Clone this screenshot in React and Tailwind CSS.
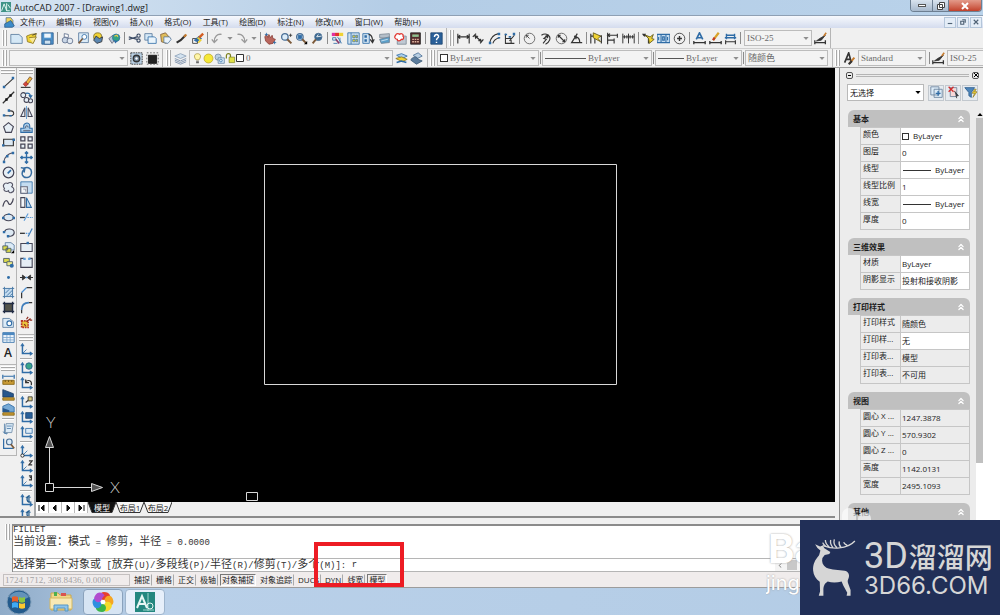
import { useState } from 'react';
import { ChevronsUp } from 'lucide-react';

const B = '#2f6ca6';
const L = '#a9cdea';
const Y = '#f0d234';
const K = '#333333';

const ucs = (
  <>
    <path d="M3 2v11h11" stroke={B} strokeWidth="1.8" />
    <path d="M1 4l2-3 2 3M12 11l3 2-3 2" stroke={B} strokeWidth="1.3" />
  </>
);

const magnifier = (
  <>
    <circle cx="6" cy="6" r="4" fill="#dcecf8" stroke="#4a6f96" strokeWidth="1.6" />
    <path d="M9 9l5 5" stroke="#7c5a3a" strokeWidth="2.4" />
  </>
);

// every icon is drawn on a 16 x 16 grid
const ICONS = {
  new: <path d="M1 3h10l4 3.500V14H1z" fill="#d5e8f6" stroke="#58799c" />,
  open: <><path d="M2 5l5-2 7-1-4 12-7-2z" fill={Y} stroke="#8a7420" /><path d="M5 7l9-1-4 8" fill="#f7e89a" stroke="#8a7420" /><path d="M9 4l5-2" stroke={K} /></>,
  save: <><path d="M1 1h14v14H1z" fill="#4f93cc" stroke="#2b5d8e" /><path d="M4 2h8v5H4z" fill="#eef6fc" stroke="none" /><path d="M4 10h8v5H4z" fill="#cfe2f1" stroke="#2b5d8e" /></>,
  print: <><path d="M4 2l5 1v4l-5-1z" fill="#fff" stroke="#5d6d8a" /><circle cx="5" cy="10" r="3.500" fill="#c9d6e6" stroke="#5d6d8a" /><circle cx="11" cy="11" r="3.500" fill="#e3eaf2" stroke="#5d6d8a" /></>,
  preview: <><path d="M2 1h12v12H2z" fill="#dcebf7" stroke="#58799c" /><circle cx="9" cy="6" r="3" fill="#fff" stroke={B} /><path d="M7 8l-5 6" stroke="#7c5a3a" strokeWidth="2" /></>,
  publish: <><circle cx="7" cy="6" r="5" fill={Y} stroke="#7a6b2c" /><path d="M5 5l4 3 4-2-1 6-6 2-4-4z" fill="#5b86b0" stroke={K} /></>,
  globe: <><path d="M1 8l5-4 3 5-4 5z" fill="#b7c6d6" stroke="#667" /><circle cx="10" cy="7" r="4.500" fill="#33a383" stroke={B} /><path d="M7 10l5 1-3 3z" fill="#2f6ca6" /><path d="M8 5l3-1 1 2" stroke="#e8c84a" strokeWidth="1.500" /></>,
  cut: <><path d="M1 6l10 3M1 9l10-3" stroke="#3c4c66" strokeWidth="1.500" /><circle cx="13" cy="10.500" r="2" stroke="#3c4c66" strokeWidth="1.400" /><circle cx="13" cy="4.500" r="2" stroke="#3c4c66" strokeWidth="1.400" /></>,
  copy: <><path d="M1 2h9v8H1z" fill="#d5e8f6" stroke="#58799c" /><path d="M5 6h8l2 2v6H5z" fill="#eaf4fb" stroke="#2f6ca6" /></>,
  paste: <><path d="M2 3l6-2 6 7-5 6-6-2z" fill="#e0bd5a" stroke="#7c5a3a" /><path d="M6 6h7l2 3-4 5-5-1z" fill="#e9f3fb" stroke="#58799c" /></>,
  pencil: <><path d="M2 13l5-3 6-6" stroke={K} strokeWidth="2.600" /><path d="M11 6l3-3" stroke="#c77b2d" strokeWidth="2.600" /></>,
  brush: <><path d="M2 8h6v6H2z" fill="#f4f4f4" stroke={K} /><path d="M4 10l6-5 3 3-6 4z" fill={B} stroke={B} /><path d="M8 7l4 3-3 3" stroke={Y} strokeWidth="2" /><path d="M10 7l5-5" stroke="#d35f23" strokeWidth="3" /></>,
  undo: <path d="M13 3C8 2 4 5 4 12M1 9l3 4 4-4" stroke="#9a9a9a" strokeWidth="1.600" />,
  redo: <path d="M3 3c5-1 9 2 9 9M15 9l-3 4-4-4" stroke="#9a9a9a" strokeWidth="1.600" />,
  pan: <><path d="M3 3l2 4 1-4 2 4 2-3 1 4 3 1-3 5-5 1-4-4-1-5z" fill="#b8655c" stroke="#8a4038" /><path d="M1 3h4M3 1v4M11 13h4M13 11v4" stroke={B} /></>,
  zoom: <>{magnifier}<path d="M11 4h4M13 2v4" stroke={K} /></>,
  zoomwin: <>{magnifier}<path d="M4 4h4v4H4z" fill={B} stroke={B} /><path d="M15 11v4h-4z" fill="#000" stroke="none" /></>,
  zoomprev: <><circle cx="9" cy="6" r="4.500" fill="#3b688f" stroke="#4a6f96" /><path d="M6 9l-4 5" stroke="#7c5a3a" strokeWidth="2.400" /><path d="M13 5l-6 1 2-3" stroke="#fff" /></>,
  props: <><path d="M1 1h4v4H1z" fill="#e02fa0" stroke="none" /><path d="M5 1h5v4H5z" fill="#e02f2f" stroke="none" /><path d="M10 1h5v4h-5z" fill={Y} stroke="none" /><path d="M2 7h4v3H2zM8 6l5 8M3 14h5M11 7v7" stroke={B} /><path d="M6 9l4 5" stroke="#8a3a6a" strokeWidth="2" /></>,
  center: <><path d="M1 1h14v14H1z" fill="#cfe2f1" stroke={B} /><path d="M5 1v14" stroke={B} /><path d="M7 4h3v3H7zM11 4h2v3h-2zM7 9h3v3H7zM11 9h2v3h-2z" fill={Y} stroke={B} strokeWidth=".8" /></>,
  palette: <><path d="M1 2h8v12H1z" fill="#cfe2f1" stroke={B} /><path d="M3 4h3v3H3zM3 9h3v3H3z" fill={B} stroke="none" /><path d="M8 3c4 0 5 3 5 9M10 9l3 4 2-4" stroke={K} strokeWidth="1.500" /></>,
  sheet: <><path d="M2 3l12-1v6L2 7z" fill="#b4bfc9" stroke="#7b8794" /><path d="M2 9l12-3v7L4 14z" fill="#5ca0c9" stroke="#6b7f93" /><path d="M4 11l8-2" stroke="#dcebf7" /></>,
  markup: <><path d="M4 5h11v10H4z" fill="#bfc9d3" stroke="#7b8794" /><path d="M2 4c1-3 4-2 5-1 2-2 5 0 4 2 2 2 0 5-2 4-2 3-5 2-5 0-3 0-4-3-2-5z" fill="#fff" stroke="#e0332d" strokeWidth="1.500" /></>,
  calc: <><path d="M2 1h12v14H2z" fill="#542c2c" stroke="#222" /><path d="M4 3h8v3H4z" fill="#8fc08f" stroke="none" /><path d="M4 9h8M4 12h8" stroke="#e2b7a2" strokeDasharray="2 1" strokeWidth="1.600" /></>,
  help: <><path d="M1 1h14v14H1z" fill="#2a6099" stroke="#1d4570" /><path d="M5.500 6c0-4 5.500-3.500 5 0-.3 1.500-2.500 1.500-2.500 4M8 12v1.500" stroke="#fff" strokeWidth="1.800" /></>,
  linear: <path d="M1 2v12M15 2v12M1 6h14M4 4L1 6l3 2M12 4l3 2-3 2" stroke={K} strokeWidth="1.400" />,
  aligned: <><path d="M1 6l4-4M10 14l4-5M3 4l9 8" stroke={K} strokeWidth="1.500" /><path d="M3 4l5 1-4 4zM12 12l-5-1 4-3z" fill={K} stroke="none" /></>,
  arclen: <><path d="M2 14C3 8 7 3 13 2M6 14c1-4 4-6 8-7" stroke={K} strokeWidth="1.300" /><path d="M1 12h3v3H1zM12 1h3v3h-3zM12 6h3v2h-3z" fill={B} stroke="none" /></>,
  ordinate: <><path d="M3 2v12h11M3 8h7v6M8 11l6-7" stroke={K} strokeWidth="1.300" /><path d="M2 2h3v2H2zM7 5h3v2H7zM12 1h3v3h-3z" fill={B} stroke="none" /></>,
  radius: <><circle cx="8" cy="8" r="6.500" stroke="#555" /><path d="M8 8L4 4M4 7V4h3" stroke={K} /></>,
  jogged: <><path d="M3 4c6-4 12 1 10 6-1 3-3 4-5 5" stroke={K} strokeWidth="1.400" /><path d="M5 14l4-5-3-1 5-4" stroke={K} strokeWidth="1.400" /><path d="M12 3l-1 5-4-3z" fill={K} stroke="none" /></>,
  diameter: <><circle cx="8" cy="8" r="6.500" stroke="#555" /><path d="M4 4l8 8M4 7V4h3M12 9v3H9" stroke={K} strokeWidth="1.400" /></>,
  angular: <path d="M9 2L2 13h13M6 6c4 0 6 3 6 7M5 5l3 1-1 3" stroke={K} strokeWidth="1.500" />,
  quick: <><path d="M1 2v12M6 2v12M14 4v10M1 5h13" stroke={K} strokeWidth="1.400" /><path d="M4 1l9 4-3 3 3 4-9-5z" fill={Y} stroke="#5c5414" /></>,
  baseline: <path d="M2 1v14M2 4h12M14 2v5M2 10h8M10 8v6M5 2L2 4l3 2" stroke={K} strokeWidth="1.400" />,
  contin: <path d="M1 2v12M8 2v12M15 2v12M1 6h14M3 4v4M6 4v4M10 4v4M13 4v4" stroke={K} strokeWidth="1.200" />,
  leader: <><path d="M1 3l7 3v8" stroke={K} strokeWidth="1.500" /><path d="M0 2l5 0-2 4z" fill={K} stroke="none" /><path d="M4 4l6 2 4-3-2 5 3 1-6 5-1-6z" fill={Y} stroke="#5c5414" /></>,
  tolerance: <><path d="M0 3h16v10H0z" fill="#c4dcf0" stroke={B} strokeWidth="1.600" /><path d="M5 3v10M11 3v10M2 6v4M7 6h2v4H7zM13 6v4" stroke={B} strokeWidth="1.300" /></>,
  mark: <><circle cx="8" cy="8" r="6.500" stroke={K} /><path d="M5 8h6M8 5v6" stroke={K} strokeWidth="1.700" /></>,
  dimedit: <><path d="M4 9l4-8 4 8M5 7h6" stroke={B} strokeWidth="2" /><path d="M1 11v4M15 11v4M1 13h14" stroke={K} strokeWidth="1.600" /></>,
  textedit: <><path d="M5 10l7-9" stroke="#d9a32a" strokeWidth="2.800" /><path d="M5 10l2-3" stroke="#c03a2a" strokeWidth="2.800" /><path d="M1 11v4M15 11v4M1 13h14" stroke={K} strokeWidth="1.600" /></>,
  update: <><path d="M3 2v7M13 2v7M3 4h10M1 7h14" stroke={B} strokeWidth="1.700" /><path d="M2 10v5M14 10v5M2 12h12" stroke={K} strokeWidth="1.400" /></>,
  dimstyle: <><path d="M1 10v5M14 10v5M1 13h13" stroke={K} strokeWidth="1.600" /><path d="M3 11l6-1 5-6-7 4z" fill={K} stroke={K} /><path d="M12 5l3-4" stroke="#c77b2d" strokeWidth="2" /></>,
  textstyle: <><path d="M2 13L7 1l3 11M4 9h5" stroke={K} strokeWidth="2" /><path d="M8 14l6-7" stroke="#c77b2d" strokeWidth="2.400" /><path d="M7 15l4-4" stroke={K} strokeWidth="2.600" /></>,
  gear: <><path d="M1 1h14v14H1z" fill="#b9cfe2" stroke="#222" strokeDasharray="2 1" /><circle cx="8" cy="8" r="4" fill="#6b7f93" stroke={K} strokeWidth="1.600" /><circle cx="8" cy="8" r="1.500" fill="#fff" stroke="none" /></>,
  workspace: <><path d="M3 4h10v10H3z" fill="#222" stroke="#111" /><path d="M1 1h14v14H1z" stroke="#555" strokeDasharray="2 2" /></>,
  layers: <><path d="M1 5l7-3 7 3-7 3z" fill="#d3e2ef" stroke="#8aa0b8" /><path d="M1 8l7 3 7-3M1 10l7 3 7-3M1 12l7 3 7-3" stroke="#7188a5" /></>,
  layercur: <><path d="M2 4l6-2 7 3-6 3z" fill={L} stroke={B} /><path d="M1 8l7-2 7 3-6 3z" fill={Y} stroke="#8a7420" /><path d="M2 13l6-2 6 2" stroke={B} strokeWidth="1.800" /></>,
  layerprev: <><path d="M4 4l6-3 5 4-6 3z" fill="#b9cfe2" stroke="#4a6f96" /><path d="M1 10c2-5 8-5 9-1l5 2-7 4z" fill="#5c7c9c" stroke="#3f5c78" /></>,
  bulb: <><path d="M8 1c6 0 5 6 2 9H6C3 7 2 1 8 1z" fill="#fff6a8" stroke="#a49032" /><path d="M6 12h4M6 14h4" stroke="#666" strokeWidth="1.500" /></>,
  sun: <circle cx="8" cy="8" r="6.500" fill="#f5e837" stroke="#b59e20" />,
  vpsun: <><circle cx="6" cy="6" r="4.500" fill="#b9cfe2" stroke="#6b7f93" /><path d="M6 7h9v8H6z" fill="#d5e8f6" stroke="#58799c" /><circle cx="10" cy="11" r="2" stroke={B} /></>,
  lock: <><path d="M2 8V4c0-4 6-4 6 0v2" stroke="#7d8220" strokeWidth="1.800" /><path d="M6 6h8v8H6z" fill="#dfe046" stroke="#7d8220" /></>,
  line: <><path d="M3 13L14 3" stroke={K} strokeWidth="1.300" /><path d="M1 12h3v3H1zM12 1h3v3h-3z" fill={B} stroke="none" /></>,
  xline: <><path d="M1 15L15 1" stroke={K} strokeWidth="1.600" /><path d="M4 9h3v3H4zM9 4h3v3H9z" fill="#111" stroke="none" /></>,
  pline: <><path d="M3 12h8c5 0 4-6 0-6H8" stroke={K} strokeWidth="1.300" /><path d="M1 10h3v3H1zM9 11h3v2H9zM7 4h3v3H7z" fill={B} stroke="none" /></>,
  polygon: <path d="M8 2l6 5-2.500 7h-7L2 7z" fill="#e6eef5" stroke="#445" strokeWidth="1.400" />,
  rect: <><path d="M2 4h12v8H2z" fill="#dde9f3" stroke={K} strokeWidth="1.400" /><path d="M0 10h3v3H0zM13 3h3v3h-3z" fill={B} stroke="none" /></>,
  arc: <><path d="M2 14C3 7 8 3 14 2" stroke="#556" strokeWidth="1.300" /><path d="M1 12h3v3H1zM5 5h3v3H5zM12 1h3v3h-3z" fill={B} stroke="none" /></>,
  circle: <><circle cx="8" cy="8" r="6.500" fill="#e6eef5" stroke="#445" strokeWidth="1.500" /><path d="M7 9l4-4" stroke={B} strokeWidth="2" /></>,
  cloud: <path d="M3 9C0 6 3 1 7 3c4-3 8 1 5 4 4 2 3 6 0 7-2 1-4 0-4-2-3 2-7 0-5-3z" fill="#e6eef5" stroke="#556" strokeWidth="1.400" />,
  spline: <path d="M1 13C4 2 7 6 8 9s5 1 6-6" stroke="#445" strokeWidth="1.500" />,
  ellipse: <><ellipse cx="8" cy="8" rx="6" ry="4" fill="#dde9f3" stroke="#445" strokeWidth="1.400" /><path d="M0 7h3v3H0zM13 7h3v3h-3zM7 3h3v2H7z" fill={B} stroke="none" /></>,
  ellarc: <><path d="M3 7c2-5 12-4 12 1s-6 5-9 4" stroke="#445" strokeWidth="1.400" fill="#dde9f3" /><path d="M1 6h3v3H1zM6 11h3v3H6z" fill={B} stroke="none" /></>,
  insert: <><path d="M4 2h7l4 3v6H4z" fill="#dcebf7" stroke="#58799c" /><path d="M1 6h6v5H1zM5 9h6v5H5z" fill="#d9d84a" stroke="#456" /><path d="M15 11v4h-4z" fill="#000" stroke="none" /></>,
  block: <><path d="M2 3h7v5H2z" fill="#d9d84a" stroke="#456" /><path d="M6 7h7v5H6z" fill="#efec88" stroke="#456" /><circle cx="12" cy="12" r="2.500" fill={B} stroke="none" /></>,
  point: <circle cx="8" cy="8" r="1.800" fill={B} stroke="none" />,
  hatch: <><path d="M3 3h10v10H3z" fill="#c4dcf0" stroke="none" /><path d="M3 1v14M13 1v14M1 3h14M1 13h14M4 9l5-5M6 12l7-7M10 12l3-3" stroke="#4b7ba8" strokeWidth="1.200" /></>,
  gradient: <><path d="M3 3h10v10H3z" fill="#54544a" stroke="none" /><path d="M3 1v14M13 1v14M1 3h14M1 13h14" stroke="#222c44" strokeWidth="1.700" /></>,
  region: <><path d="M1 3h8l5 4v7H1z" fill="#dcebf7" stroke="#58799c" /><circle cx="9" cy="9" r="3" fill="#fff" stroke={B} strokeWidth="1.400" /></>,
  table: <><path d="M1 2h14v12H1z" fill="#eef5fb" stroke={B} /><path d="M1 2h14v3H1z" fill="#4c88c0" stroke="none" /><path d="M1 8h14M1 11h14M6 5v9M10 5v9" stroke="#7ba5cc" /></>,
  dist: <><path d="M1 2v5M15 2v5M2 4h12" stroke={B} strokeWidth="1.500" /><path d="M1 9h14v5H1z" fill="#c89a35" stroke="#836313" /><path d="M4 9v2M8 9v2M12 9v2" stroke="#5b430b" /></>,
  area: <><path d="M1 2l13 5v4H1z" fill="#27578c" stroke="#1b3e66" /><path d="M1 12h14v3H1z" fill="#c89a35" stroke="#836313" /></>,
  massprop: <><path d="M1 4l7-3 7 4v6H1z" fill="#77aad6" stroke={B} /><path d="M1 6l8 3v2H1z" fill="#27578c" stroke="none" /><path d="M1 12h14v3H1z" fill="#c89a35" stroke="#836313" /></>,
  list: <><path d="M5 2h9l-2 11H4z" fill="#dcebf7" stroke="#6f8aa6" /><path d="M6 5h6M6 8h5M3 2v12h4M1 12l5 3" stroke="#4b7ba8" /></>,
  locate: <><path d="M2 2v12h12" stroke={B} strokeWidth="1.500" /><circle cx="9" cy="6" r="3.500" fill="#dcecf8" stroke="#4a6f96" strokeWidth="1.400" /><path d="M11 9l4 5" stroke="#7c5a3a" strokeWidth="2" /></>,
  erase: <><path d="M7 8l5-7 3 2-6 8z" fill="#efb53a" stroke="#7c5a3a" /><path d="M4 10l3-3 3 3-3 3z" fill="#d4483b" stroke="#933" /><path d="M1 14h12" stroke={K} strokeWidth="1.400" /></>,
  copyobj: <><circle cx="4" cy="5" r="3" fill="#e6eef5" stroke="#445" strokeWidth="1.300" /><circle cx="8" cy="11" r="3" fill="#e6eef5" stroke="#445" strokeWidth="1.300" /><circle cx="13" cy="12" r="2.500" fill="#e6eef5" stroke="#445" strokeWidth="1.300" /><path d="M7 3c4-1 6 1 6 4M11 5l2 3 2-3" stroke={B} strokeWidth="1.500" /></>,
  mirror: <><path d="M6 2v11H1zM10 2v11h5z" fill="#e6eef5" stroke="#445" strokeWidth="1.300" /><path d="M8 0v16" stroke="#6aa2d4" strokeWidth="1.300" /></>,
  offset: <><path d="M1 14V9h4C2 2 12 0 12 6v3h3v5z" fill="#a9cdea" stroke={B} strokeWidth="1.300" /><path d="M4 12h9M7 9c-1-4 3-4 3-1" stroke="#445" /></>,
  array: <path d="M1 1h5v5H1zM10 1h5v5h-5zM1 10h5v5H1zM10 10h5v5h-5z" fill="#e6eef5" stroke="#445" strokeWidth="1.500" />,
  move: <path d="M8 1v14M1 8h14M6 3l2-2 2 2M6 13l2 2 2-2M3 6L1 8l2 2M13 6l2 2-2 2" stroke={B} strokeWidth="1.700" />,
  rotate: <path d="M5 3c5-3 10 1 9 6-1 6-9 7-11 2-1-3 0-5 2-7M1 2l5 1-1 5" stroke="#356b9f" strokeWidth="1.800" />,
  scale: <><path d="M1 1h14v14H1z" fill="#c4dcf0" stroke={B} /><path d="M1 7h8v8H1z" fill="#f3f6f9" stroke="#667" strokeWidth="1.300" /><path d="M4 10h3v3" stroke="#889" /></>,
  stretch: <><path d="M1 2h5v12H1z" fill="#f3f6f9" stroke="#445" strokeWidth="1.300" /><path d="M8 2l6 12H8z" fill="#c4dcf0" stroke={B} strokeWidth="1.300" /></>,
  trim: <><path d="M0 8h6" stroke={K} strokeWidth="1.600" /><path d="M9 8h7" stroke="#5d9cd8" strokeDasharray="2 1" strokeWidth="1.500" /><path d="M5 12l5-9" stroke="#5d9cd8" strokeWidth="1.400" /></>,
  extend: <><path d="M0 9h6" stroke={K} strokeWidth="1.600" /><path d="M7 9h4" stroke="#5d9cd8" strokeDasharray="2 1" strokeWidth="1.500" /><path d="M10 13l5-10" stroke="#3f7ebc" strokeWidth="1.500" /></>,
  breakpt: <><path d="M1 3h14v10H1z" fill="#e6eef5" stroke="#445" strokeWidth="1.300" /><path d="M8 1h3v3H8z" fill={B} stroke="none" /></>,
  breaks: <><path d="M5 3H1v11h14V3h-4" fill="#e6eef5" stroke="#445" strokeWidth="1.400" /><path d="M4 2h3v3H4zM10 2h3v3h-3z" fill="#5d9cd8" stroke="none" /></>,
  join: <><path d="M0 8h16" stroke={K} strokeWidth="1.300" /><path d="M3 5l4 3-4 3zM13 5L9 8l4 3z" fill={K} stroke={K} /><path d="M7 7h2v2H7z" fill="#5d9cd8" stroke="none" /></>,
  chamfer: <><path d="M2 15V8M8 2h7" stroke={K} strokeWidth="1.500" /><path d="M2 8l6-6" stroke="#4c8fd0" strokeWidth="1.700" /></>,
  fillet: <><path d="M2 15v-4M11 2h4" stroke={K} strokeWidth="1.500" /><path d="M2 11c0-6 3-9 9-9" stroke="#3f7ebc" strokeWidth="2" /></>,
  explode: <><path d="M2 6h8v8H2z" fill="#e9c53c" stroke="#b83325" strokeDasharray="2 1" strokeWidth="2" /><path d="M8 7l5-4M12 5h3M8 4l2-3M5 10l2 2" stroke="#8f2c20" strokeWidth="1.500" /></>,
  ucs: <>{ucs}<path d="M3 13l5-5" stroke={B} /></>,
  ucsworld: <>{ucs}<circle cx="11" cy="5" r="4" fill="#3aa58a" stroke="#245d8f" /></>,
  ucsprev: <>{ucs}<path d="M14 10c1-6-4-7-7-4M7 3v4h4" stroke={K} strokeWidth="1.500" /></>,
  ucsface: <>{ucs}<path d="M7 8l7-6" stroke={K} strokeWidth="1.300" /><path d="M10 1h5v5h-5z" fill="#d8c878" stroke={K} /></>,
  ucsobj: <>{ucs}<path d="M7 2h8v7H7z" fill="#2a6099" stroke="#1d4570" /></>,
  ucsview: <>{ucs}<path d="M7 3h8v6H7z" fill="#dcebf7" stroke={B} /></>,
  ucsorigin: <>{ucs}<path d="M3 13l6-6" stroke={B} /><circle cx="3" cy="13" r="2" fill="#fff" stroke="#111" /></>,
  ucsz: <>{ucs}<path d="M3 13l5-5" stroke={B} /><path d="M11 1h4l-4 5h4" stroke={K} strokeWidth="1.500" /></>,
  ucs3: <>{ucs}<path d="M3 13l5-5" stroke={B} /><path d="M11 1h3v5h-3M12 3h2" stroke={K} strokeWidth="1.500" /></>,
  ucsx: <>{ucs}<path d="M12 2c-5 1-4 8 0 8M7 4h6M11 5v5h3" stroke="#245d8f" strokeWidth="1.500" /></>,
  pickadd: <><path d="M1 1h10v10H1zM5 4h10v10H5z" fill="#dcebf7" stroke="#667f99" /><path d="M7 9h6M10 6v6" stroke={B} strokeWidth="1.600" /></>,
  pick: <><path d="M4 2h8v11H4z" fill="#f7d9d9" stroke="#667f99" /><path d="M2 1l6 6M8 1L2 7" stroke="#cf2d2d" strokeWidth="1.600" /><path d="M9 6l5 6-3 0 1 3" fill="#345" stroke={K} /></>,
  filter: <><path d="M1 2h12L9 8v6l-3-2V8z" fill="#4e86ba" stroke="#2b5d8e" /><path d="M13 4l-3 5h3l-2 5 5-7h-3l2-3z" fill={Y} stroke="#8a7420" strokeWidth=".8" /></>,
  dwg: <><path d="M3 1h7l3 4v8H3z" fill="#f1d35a" stroke="#3e6286" /><path d="M1 10l9-5 5 8-3 2H1z" fill="#3c8ac9" stroke="#24527c" /></>,
};

function Icon({ name, small }) {
  return (
    <svg viewBox="0 0 16 16" fill="none" className={small ? 'size-[11px] shrink-0' : 'size-[13px] shrink-0'} aria-hidden="true">
      {ICONS[name]}
    </svg>
  );
}

function ToolButton({ name }) {
  return (
    <button type="button" aria-label={name} className="flex h-[15px] w-[14px] shrink-0 items-center justify-center">
      <Icon name={name} />
    </button>
  );
}

const Sep = () => <span className="flex h-3 w-[3px] shrink-0 justify-center"><span className="w-px bg-[#8c8c8c]" /></span>;
const HSep = () => <span className="my-px h-[2px] w-3 shrink-0 border-t border-[#a8a8a8] bg-white" />;

const Grip = () => (
  <span className="mr-[2px] flex h-4 shrink-0 gap-px">
    <span className="w-[2px] border-r border-[#a8a8a8] bg-white" />
    <span className="w-[2px] border-r border-[#a8a8a8] bg-white" />
  </span>
);

const HGrip = () => (
  <span className="my-px flex w-[14px] shrink-0 flex-col gap-px">
    <span className="h-[2px] border-b border-[#a8a8a8] bg-white" />
    <span className="h-[2px] border-b border-[#a8a8a8] bg-white" />
  </span>
);

function Arrow({ dark }) {
  return (
    <svg viewBox="0 0 7 4" className={dark ? 'pointer-events-none h-[3px] w-[6px] shrink-0 text-black' : 'pointer-events-none h-[3px] w-[6px] shrink-0 text-[#8f8f8f]'} fill="currentColor">
      <path d="M0 0h7L3.500 4z" />
    </svg>
  );
}

function Combo({ label, value, width, lead, sans }) {
  return (
    <div className={`flex h-4 shrink-0 items-center gap-[2px] border border-[#bcbcbc] bg-[#f3f3f3] px-[2px] text-[#6a6a6a] ${width}`}>
      {lead}
      <select
        aria-label={label}
        className={`h-full min-w-0 flex-1 appearance-none bg-transparent leading-[14px] outline-none ${sans ? 'text-[9px]' : 'font-["Liberation_Serif"] text-[9px]'}`}
      >
        <option>{value}</option>
      </select>
      <Arrow />
    </div>
  );
}

function renderTool(item, i) {
  if (item === '|') return <Sep key={i} />;
  if (item === 'v') return <span key={i} className="flex w-[7px] justify-center"><Arrow /></span>;
  if (item === 'dimselect') return <Combo key={i} label="标注样式" value="ISO-25" width="w-[68px]" />;
  return <ToolButton key={i} name={item} />;
}

const STANDARD = ['new', 'open', 'save', '|', 'print', 'preview', 'publish', 'globe', '|', 'cut', 'copy', 'paste', 'pencil', 'brush', '|', 'undo', 'v', 'redo', 'v', '|', 'pan', 'zoom', 'zoomwin', 'zoomprev', '|', 'props', 'center', 'palette', 'sheet', 'markup', 'calc', '|', 'help'];
const DIMENSION = ['linear', 'aligned', 'arclen', 'ordinate', '|', 'radius', 'jogged', 'diameter', 'angular', '|', 'quick', 'baseline', 'contin', '|', 'leader', 'tolerance', 'mark', '|', 'dimedit', 'textedit', 'update', '|', 'dimselect', 'dimstyle'];
const DRAW = ['line', 'xline', 'pline', 'polygon', 'rect', 'arc', 'circle', 'cloud', 'spline', 'ellipse', 'ellarc', 'insert', 'block', 'point', 'hatch', 'gradient', 'region', 'table'];
const INQUIRY = ['dist', 'area', 'massprop', '|', 'list', 'locate'];
const MODIFY = ['erase', 'copyobj', 'mirror', 'offset', 'array', 'move', 'rotate', 'scale', 'stretch', 'trim', 'extend', 'breakpt', 'breaks', 'join', 'chamfer', 'fillet', 'explode'];
const UCS = ['ucs', '|', 'ucsworld', 'ucsprev', '|', 'ucsface', 'ucsobj', 'ucsview', '|', 'ucsorigin', 'ucsz', 'ucs3', '|', 'ucsx', 'ucsx'];
const MENUS = ['文件(F)', '编辑(E)', '视图(V)', '插入(I)', '格式(O)', '工具(T)', '绘图(D)', '标注(N)', '修改(M)', '窗口(W)', '帮助(H)'];

const vertical = (item, i) => (item === '|' ? <HSep key={i} /> : <ToolButton key={i} name={item} />);

function TitleBar() {
  return (
    <header className="flex h-[15px] shrink-0 items-start bg-linear-to-r from-[#d6e4f2] via-[#b4cde6] via-40% to-[#b9d2ea]">
      <svg viewBox="0 0 16 16" className="mt-[2px] ml-px size-[10px]">
        <path d="M0 0h16v16H0z" fill="#3f9287" />
        <path d="M1 14L5 3l4 11M9 2v12h5M11 4l4 6" stroke="#e7f7f3" strokeWidth="1.500" fill="none" />
      </svg>
      <h1 className="ml-[3px] font-['Open_Sans'] text-[9px] leading-[15px] text-[#1c1c1c]">AutoCAD 2007 - [Drawing1.dwg]</h1>
      <div className="mr-px ml-auto flex h-3 overflow-hidden rounded-b-sm border border-t-0 border-[#6d7f92]">
        <button type="button" aria-label="最小化" className="flex w-[22px] items-center justify-center border-r border-[#6d7f92] bg-linear-to-b from-[#d9e3ee] to-[#a7b9cd]">
          <span className="h-[3px] w-2 border border-[#555] bg-white" />
        </button>
        <button type="button" aria-label="还原" className="flex w-4 items-center justify-center border-r border-[#6d7f92] bg-linear-to-b from-[#d9e3ee] to-[#a7b9cd]">
          <svg viewBox="0 0 8 8" className="size-2" fill="#fff" stroke="#444"><path d="M2.500.5h5v5h-5zM.5 2.500h5v5h-5z" /></svg>
        </button>
        <button type="button" aria-label="关闭" className="flex w-8 items-center justify-center bg-linear-to-b from-[#e39a8a] to-[#c2402a]">
          <svg viewBox="0 0 8 8" className="size-2" stroke="#fff" strokeWidth="2"><path d="M1 1l6 6M7 1L1 7" /></svg>
        </button>
      </div>
    </header>
  );
}

function MenuBar() {
  return (
    <nav className="flex h-[13px] shrink-0 items-center border-t border-[#8fa0b4] bg-linear-to-b from-[#f7f9fd] to-[#d4dcee] pl-1 text-[8px] leading-3 text-[#222]">
      <Icon name="dwg" small />
      <div className="ml-[5px] flex w-[401px] justify-between">
        {MENUS.map((m) => (
          <button key={m} type="button">{m}</button>
        ))}
      </div>
      <div className="mr-px ml-auto flex gap-px">
        {['M1 6h6', 'M3 1h4v4M1 3h4v4H1z', 'M1 1l6 6M7 1L1 7'].map((d) => (
          <button key={d} type="button" aria-label="文档窗口" className="flex h-[11px] w-3 items-center justify-center border border-[#b4c6da] bg-[#e4edf7]">
            <svg viewBox="0 0 8 8" className="size-[6px]" fill="none" stroke="#4f6275" strokeWidth="1.500"><path d={d} /></svg>
          </button>
        ))}
      </div>
    </nav>
  );
}

const SampleLine = ({ wide }) => <span className={wide ? 'h-px w-[41px] bg-[#555]' : 'h-px w-[26px] bg-[#555]'} />;

function Toolbars() {
  return (
    <div className="shrink-0 bg-[#f0f0f0]">
      <div className="flex h-[21px] items-center border-b border-[#cfcfcf]">
        <div className="flex h-full w-[447px] items-center border-r border-[#b5b5b5] pl-[2px]">
          <Grip />
          <div className="flex w-[434px] items-center justify-between">{STANDARD.map(renderTool)}</div>
        </div>
        <div className="flex h-full w-[384px] items-center border-r border-[#b5b5b5] pl-[2px]">
          <Grip />
          <div className="flex w-[372px] items-center justify-between">{DIMENSION.map(renderTool)}</div>
        </div>
      </div>
      <div className="flex h-[19px] items-center overflow-hidden border-b border-[#9d9d9d]">
        <div className="flex h-full w-[163px] shrink-0 items-center border-r border-[#b5b5b5] pl-[2px]">
          <Grip />
          <Combo label="工作空间" value="" width="w-[119px]" />
          <span className="ml-px flex gap-[2px]">
            <ToolButton name="gear" />
            <ToolButton name="workspace" />
          </span>
        </div>
        <div className="flex h-full w-[265px] shrink-0 items-center border-r border-[#b5b5b5] pl-[3px]">
          <Grip />
          <ToolButton name="layers" />
          <Combo
            label="图层"
            value="0"
            width="w-[204px] ml-[2px]"
            lead={
              <span className="flex items-center">
                <Icon small name="bulb" /><Icon small name="sun" /><Icon small name="vpsun" /><Icon small name="lock" />
                <svg viewBox="0 0 8 8" className="size-2" fill="#fff" stroke="#333"><path d="M.5.5h7v7h-7z" /></svg>
              </span>
            }
          />
          <span className="ml-px flex gap-px">
            <ToolButton name="layercur" />
            <ToolButton name="layerprev" />
          </span>
        </div>
        <div className="flex h-full w-[405px] shrink-0 items-center border-r border-[#b5b5b5] pl-[2px]">
          <Grip />
          <Combo label="颜色" value="ByLayer" width="w-[102px]" lead={<span className="size-2 border border-[#333] bg-white" />} />
          <Sep />
          <Combo label="线型" value="ByLayer" width="w-[110px]" lead={<SampleLine wide />} />
          <Sep />
          <Combo label="线宽" value="ByLayer" width="w-[87px]" lead={<SampleLine />} />
          <Sep />
          <Combo label="打印样式" value="随颜色" width="w-[83px]" sans />
        </div>
        <div className="flex h-full min-w-0 flex-1 items-center overflow-hidden pl-[2px]">
          <Grip />
          <ToolButton name="textstyle" />
          <Combo label="文字样式" value="Standard" width="w-[68px] mx-[2px]" />
          <Sep />
          <ToolButton name="dimstyle" />
          <Combo label="标注样式" value="ISO-25" width="w-[68px] ml-[2px]" />
        </div>
      </div>
    </div>
  );
}

function SideTools() {
  return (
    <div className="flex w-9 shrink-0 items-start justify-between overflow-hidden border-r-2 border-[#a5a8aa] bg-[#f0f0f0]">
      <div className="flex w-[17px] flex-col">
        <div className="flex flex-col items-center border-r border-b border-[#b5b5b5] pb-1">
          <HGrip />
          {DRAW.map(vertical)}
          <button type="button" aria-label="多行文字" className="h-[15px] font-['Open_Sans'] text-[12px] leading-[15px] font-semibold text-[#222]">A</button>
        </div>
        <div className="flex flex-col items-center border-r border-b border-[#b5b5b5] pb-1">
          <HGrip />
          {INQUIRY.map(vertical)}
        </div>
      </div>
      <div className="flex h-full w-4 flex-col overflow-hidden">
        <div className="flex flex-col items-center border-b border-[#b5b5b5] pb-1">
          <HGrip />
          {MODIFY.map(vertical)}
        </div>
        <div className="flex min-h-0 flex-1 flex-col items-center overflow-hidden">
          <HGrip />
          {UCS.map(vertical)}
        </div>
      </div>
    </div>
  );
}

function DrawingArea() {
  return (
    <div className="min-h-0 flex-1 overflow-hidden bg-black">
      <svg className="h-full w-full" viewBox="0 0 798 434" preserveAspectRatio="xMinYMin meet" fill="none" stroke="#d8d8d8" strokeWidth="1">
        <path d="M228.500 96.500h352v220h-352z" />
        <path d="M9.500 415.500h8v8h-8zM13.500 415.500v-36M17.500 419.500h38" />
        <path d="M13.500 368.500l4 11h-8zM66.500 419.500l-11 4v-8z" fill="#555" />
        <path d="M210.500 424.500h11v8h-11z" />
        <g fill="#cfcfcf" stroke="none" fontFamily="Lato" fontWeight="300" fontSize="16">
          <text x="10" y="360">Y</text>
          <text x="74" y="425">X</text>
        </g>
      </svg>
    </div>
  );
}

function LayoutTabs() {
  const [active, setActive] = useState('模型');
  return (
    <div className="flex h-[11px] shrink-0 items-center bg-[#f0f0f0] text-[8px] leading-[10px] text-[#222]">
      <div className="flex bg-white">
        {['M1 1v6M6 1L3 4l3 3z', 'M5 1L2 4l3 3z', 'M3 1l3 3-3 3z', 'M2 1l3 3-3 3zM7 1v6'].map((d) => (
          <button key={d} type="button" aria-label="切换布局" className="flex h-[11px] w-[13px] items-center justify-center border-r border-[#bbb]">
            <svg viewBox="0 0 8 8" className="size-2" fill="#111" stroke="#111"><path d={d} /></svg>
          </button>
        ))}
      </div>
      {['模型', '布局1', '布局2'].map((tab) => (
        <button
          key={tab}
          type="button"
          onClick={() => setActive(tab)}
          className="relative flex h-[11px] w-7 items-center justify-center"
        >
          <svg viewBox="0 0 28 11" className="absolute inset-0 h-full w-full" fill={active === tab ? '#111' : '#f6f6f6'} stroke="#333">
            <path d="M0 0l4 10.500h20L28 0" />
          </svg>
          <span className={active === tab ? 'relative text-white' : 'relative'}>{tab}</span>
        </button>
      ))}
    </div>
  );
}

const GROUPS = [
  { title: '基本', rows: [['颜色', 'ByLayer', 'swatch'], ['图层', '0'], ['线型', 'ByLayer', 'line'], ['线型比例', '1'], ['线宽', 'ByLayer', 'line'], ['厚度', '0']] },
  { title: '三维效果', rows: [['材质', 'ByLayer'], ['阴影显示', '投射和接收阴影']] },
  { title: '打印样式', rows: [['打印样式', '随颜色', 'off'], ['打印样...', '无'], ['打印表...', '模型', 'off'], ['打印表...', '不可用', 'off']] },
  { title: '视图', rows: [['圆心 X ...', '1247.3878', 'off'], ['圆心 Y ...', '570.9302', 'off'], ['圆心 Z ...', '0', 'off'], ['高度', '1142.0131', 'off'], ['宽度', '2495.1093', 'off']] },
  { title: '其他', rows: [] },
];

function PropertyGroup({ title, rows }) {
  return (
    <section>
      <h2 className="flex h-[17px] items-center justify-between rounded-t-md bg-[#c0c0c0] pr-1 pl-[5px] text-[8px] font-bold text-[#1e1e1e]">
        {title}
        <ChevronsUp className="size-[10px] text-white" strokeWidth={3} />
      </h2>
      <table className="ml-3 w-[110px] table-fixed border-collapse text-[8px] leading-[10px] text-[#222]">
        <tbody>
          {rows.map(([label, value, kind], i) => (
            <tr key={i} className="h-[17px]">
              <th className="w-10 border border-[#c6c6c6] bg-[#ececec] p-0 pb-1 pl-[2px] text-left font-normal whitespace-nowrap">{label}</th>
              <td className={`border border-[#c6c6c6] p-0 pl-px whitespace-nowrap ${kind === 'off' ? 'bg-[#ececec]' : 'bg-white'}`}>
                <span className="flex items-center gap-1">
                  {kind === 'swatch' && <span className="size-[7px] border border-[#333]" />}
                  {kind === 'line' && <span className="ml-px h-px w-7 bg-[#333]" />}
                  {value}
                </span>
              </td>
            </tr>
          ))}
        </tbody>
      </table>
    </section>
  );
}

function Properties() {
  return (
    <aside className="ml-1 flex w-[144px] shrink-0 flex-col overflow-hidden border-l border-[#8f8f8f] bg-[#ececec]">
      <div className="flex h-[14px] shrink-0 items-center gap-[3px] pr-1 pl-[6px]">
        <button type="button" aria-label="折叠" className="flex size-[7px] items-center justify-center rounded-xs border border-[#555]"><span className="h-px w-[3px] bg-black" /></button>
        <span className="h-[3px] flex-1 border-y border-[#b5b5b5]" />
        <button type="button" aria-label="关闭特性" className="flex size-[7px] items-center justify-center rounded-xs border border-[#555]">
          <svg viewBox="0 0 4 4" className="size-1" stroke="#000"><path d="M0 0l4 4M4 0L0 4" /></svg>
        </button>
      </div>
      <div className="mt-[2px] flex h-[17px] shrink-0 items-center gap-px pl-[7px]">
        <div className="mr-[3px] flex h-[17px] w-[77px] items-center border border-[#b9b9b9] bg-white pr-[2px] pl-[2px]">
          <select aria-label="选择对象" className="min-w-0 flex-1 appearance-none bg-transparent text-[8px] leading-3 text-[#111] outline-none">
            <option>无选择</option>
          </select>
          <Arrow dark />
        </div>
        {['pickadd', 'pick', 'filter'].map((name) => (
          <button key={name} type="button" aria-label={name} className="flex size-4 items-center justify-center border border-[#c2c8ce] bg-[#e6ebf0]"><Icon name={name} /></button>
        ))}
      </div>
      <div className="mt-[9px] flex min-h-0 flex-1 overflow-hidden pl-2">
        <div className="flex w-[122px] shrink-0 flex-col gap-2">
          {GROUPS.map((g) => (
            <PropertyGroup key={g.title} title={g.title} rows={g.rows} />
          ))}
        </div>
        <div className="ml-auto flex w-[7px] flex-col bg-white">
          <span className="flex h-2 items-center justify-center bg-[#ececec]"><span className="rotate-180"><Arrow dark /></span></span>
          <span className="h-5/6 bg-[#c0c0c0]" />
        </div>
      </div>
    </aside>
  );
}

// latin runs are set smaller so that two of them fill one ideograph
function ConsoleText({ children }) {
  return children.split(/([\x20-\x7e]+)/).map((part, i) =>
    /^[\x20-\x7e]+$/.test(part) ? (
      <span key={i} className="font-['Liberation_Mono'] text-[9px] whitespace-pre">{part}</span>
    ) : (
      <span key={i}>{part}</span>
    )
  );
}

function CommandLine() {
  const [command, setCommand] = useState('r');
  return (
    <div className="flex h-12 shrink-0 bg-[#f0f0f0] pl-[5px]">
      <Grip />
      <div className="flex min-w-0 flex-1 flex-col border-t-2 border-l border-[#8b8b8b] bg-white text-[11px] leading-[11px] text-[#333]">
        <div className="h-8 shrink-0">
          <p className="font-['Liberation_Mono'] text-[9px] leading-[9px]">FILLET</p>
          <p><ConsoleText>当前设置：模式 = 修剪，半径 = 0.0000</ConsoleText></p>
        </div>
        <div className="flex h-[14px] items-center border-t border-b border-[#b5b5b5]">
          <label htmlFor="command" className="shrink-0 whitespace-pre"><ConsoleText>{'选择第一个对象或 [放弃(U)/多段线(P)/半径(R)/修剪(T)/多个(M)]: '}</ConsoleText></label>
          <input
            id="command"
            value={command}
            onChange={(e) => setCommand(e.target.value)}
            className="min-w-0 flex-1 font-['Liberation_Mono'] text-[9px] outline-none"
          />
          <div className="flex h-full w-[208px] items-center gap-[5px] bg-[#f4f4f4]">
            <svg viewBox="0 0 4 6" className="ml-[3px] h-[5px] w-1" fill="none" stroke="#666"><path d="M3.500.5L1 3l2.500 2.500" /></svg>
            <span className="h-[10px] w-[10px] bg-[#c8c8c8]" />
          </div>
        </div>
      </div>
    </div>
  );
}

const MODES = [['捕捉'], ['栅格'], ['正交'], ['极轴'], ['对象捕捉', true], ['对象追踪'], ['DUCS'], ['DYN'], ['线宽'], ['模型', true]];

function StatusBar() {
  return (
    <div className="flex h-4 shrink-0 items-center gap-[2px] border-b border-[#9c9c9c] bg-[#f0ecec] pl-[3px]">
      <span className="h-3 w-[127px] border border-[#c4c0c0] pl-px font-['Liberation_Serif'] text-[9px] leading-[10px] text-[#a3a3a3]">1724.1712, 308.8436, 0.0000</span>
      {MODES.map(([label, on]) => (
        <button
          key={label}
          type="button"
          aria-pressed={!!on}
          className={`h-3 border px-px text-[8px] leading-[10px] text-[#222] ${on ? 'border-[#777] border-r-white border-b-white' : 'border-transparent border-r-[#aaa]'}`}
        >
          {label}
        </button>
      ))}
    </div>
  );
}

function TaskBar() {
  return (
    <footer className="flex h-[27px] shrink-0 items-center bg-linear-to-r from-[#8fabc8] via-[#b9d0e9] via-15% to-[#b3cce5]">
      <button type="button" aria-label="开始" className="ml-[6px]">
        <svg viewBox="0 0 26 26" className="size-[26px]">
          <circle cx="13" cy="13" r="12" fill="#235a8c" stroke="#7f9db8" />
          <path d="M3 8a12 12 0 0 1 20 0c-6 4-14 4-20 0z" fill="#7fa9cc" opacity=".7" />
          <path d="M6 8c2-1 4-1 6 0v5c-2-1-4-1-6 0z" fill="#e8612c" />
          <path d="M13 8c2 1 4 1 6 0v5c-2 1-4 1-6 0z" fill="#8cc63f" />
          <path d="M6 14c2-1 4-1 6 0v5c-2-1-4-1-6 0z" fill="#3fa9f5" />
          <path d="M13 14c2 1 4 1 6 0v5c-2 1-4 1-6 0z" fill="#fcc92f" />
        </svg>
      </button>
      <button type="button" aria-label="资源管理器" className="ml-4">
        <svg viewBox="0 0 26 24" className="h-6 w-[26px]">
          <path d="M3 3h7l2 2h11v15H3z" fill="#f0d78a" stroke="#c9a84c" />
          <path d="M6 2h3v4H6z" fill="#4caf50" /><path d="M13 3h5v3h-5z" fill="#d9534f" />
          <path d="M2 8h22v11H2z" fill="#f8e9b4" stroke="#d5b860" />
          <path d="M6 21v-6h14v6h-3v-3H9v3z" fill="#8ec5ea" stroke="#5797c4" />
        </svg>
      </button>
      <button type="button" aria-label="浏览器" className="ml-[9px] flex h-[26px] w-10 items-center justify-center rounded-sm border border-[#8aa2bc] bg-[#d6e4f3]">
        <svg viewBox="0 0 24 24" className="size-[22px]">
          {['#e8402f', '#f5a623', '#f5dc2b', '#3cb54a', '#2e8fe0', '#b04ccf'].map((c, i) => (
            <path key={c} d="M12 10C7 8 8 1 13 1c7 0 8 5 6 9-2-1-5-1-7 0z" fill={c} transform={`rotate(${i * 60} 12 12)`} />
          ))}
          <circle cx="12" cy="12" r="2.500" fill="#fff" />
        </svg>
      </button>
      <button type="button" aria-label="AutoCAD" className="ml-[2px] flex h-[26px] w-10 items-center justify-center rounded-sm border border-[#9db4cc] bg-[#e6effa]">
        <svg viewBox="0 0 20 20" className="size-5">
          <path d="M0 0h20v20H0z" fill="#23877f" />
          <path d="M2 16L7 4l5 12M4 12h6" stroke="#e6f6f3" strokeWidth="2" fill="none" />
          <path d="M13 1v18M8 18h11" stroke="#9fd5cd" fill="none" />
          <circle cx="15" cy="14" r="3" stroke="#e6f6f3" fill="none" />
        </svg>
      </button>
    </footer>
  );
}

function SiteBadge() {
  return (
    <div className="absolute right-0 bottom-0 flex h-[95px] w-[200px] items-center bg-[#212f57] text-[#d6d6d6]">
      <svg viewBox="216 130 132 178" className="ml-3 h-[59px] w-11 shrink-0" fill="currentColor">
        <path d="M225 149l15 7 8-3 5 8 18 11-3 6-14 3-7 9c-3 12 1 22 12 30 16 7 38 6 55 9 10 2 15 10 13 19-2 8-5 9-3 17l8 22v17h-12l2-9-12-22-5-12c-15 4-29 4-42 0-11 7-13 16-13 26v17h-14l4-13-1-29c-12-9-19-20-20-34-1-20 6-32 18-46l4-14-9-8z" />
        <g fill="none" stroke="currentColor" strokeWidth="4">
          <path d="M248 153c15 5 32 10 50 7 20-2 35-8 47-21M268 157c-8-6-12-12-12-21M279 159c-7-8-9-14-7-23M291 159c-8-6-11-14-8-25M303 158c-5-5-7-10-5-18M322 152c-5-2-9-5-11-9" />
          <path d="M258 156c-4-4-8-6-10-12" />
        </g>
      </svg>
      <div className="ml-2 flex flex-col">
        <div className="flex h-9 items-center font-['Roboto'] text-[36px] leading-9">
          <span>3D</span>
          <span className="ml-px font-['Noto_Sans_CJK_SC'] text-[28px] leading-9 font-medium">溜溜网</span>
        </div>
        <span className="font-['Inter'] text-[24px] leading-6">3D66.COM</span>
      </div>
    </div>
  );
}

export default function App() {
  return (
    <div className="relative h-screen overflow-hidden bg-white pr-[17px] font-['Open_Sans','Noto_Sans_CJK_SC',sans-serif]">
      <div className="flex h-full flex-col">
        <TitleBar />
        <MenuBar />
        <Toolbars />
        <div className="flex min-h-0 flex-1 bg-[#f0f0f0]">
          <div className="flex min-w-0 flex-1 flex-col pb-[6px]">
            <div className="flex min-h-0 flex-1 border-b-2 border-[#8b8b8b]">
              <SideTools />
              <div className="flex min-w-0 flex-1 flex-col bg-[#f0f0f0] pb-[3px]">
                <DrawingArea />
                <LayoutTabs />
              </div>
            </div>
          </div>
          <Properties />
        </div>
        <div className="relative shrink-0">
          <CommandLine />
          <StatusBar />
          <div className="pointer-events-none absolute top-[18px] left-[314px] h-[45px] w-[90px] border-4 border-[#ed1c24]" />
        </div>
        <TaskBar />
      </div>
      <div className="pointer-events-none absolute right-[129px] bottom-[95px] flex items-end gap-[2px]">
        <span className="h-3 w-[14px] rounded-t-full bg-white/60" />
        <span className="h-2 w-[13px] rounded-t-full bg-white/60" />
      </div>
      <div className="pointer-events-none absolute right-[198px] bottom-5 w-9 overflow-hidden font-['Inter'] text-white [text-shadow:0_0_2px_#999]">
        <p className="pl-[2px] text-[40px] leading-[44px] font-bold">Ba</p>
        <p className="text-[20px] leading-6">jing</p>
      </div>
      <SiteBadge />
    </div>
  );
}
